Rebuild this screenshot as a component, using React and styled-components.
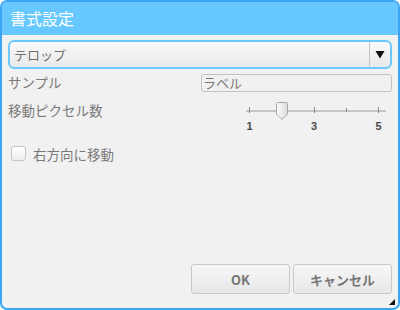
import React from 'react'
import styled, { createGlobalStyle } from 'styled-components'

const Global = createGlobalStyle`
  html, body { margin: 0; padding: 0; background: #ffffff; }
  body { font-family: "Noto Sans CJK JP", "Noto Sans", sans-serif; }
`

const Window = styled.div`
  position: relative;
  width: 400px;
  height: 310px;
  box-sizing: border-box;
  border: 2px solid #3aa6f2;
  border-radius: 7px;
  background: #f1f1f1;
  display: flex;
  flex-direction: column;
  overflow: hidden;
`

const TitleBar = styled.div`
  height: 33px;
  flex: none;
  background: #66c8ff;
  color: #ffffff;
  font-size: 16px;
  line-height: 33px;
  padding-left: 8px;
`

const Body = styled.div`
  flex: 1;
  display: flex;
  flex-direction: column;
  padding: 5px 6px 14px 6px;
`

const Select = styled.div`
  height: 29px;
  box-sizing: border-box;
  border: 2px solid #6cc8ff;
  border-radius: 6px;
  background: linear-gradient(#fafafa, #e9e9e9);
  display: flex;
  align-items: stretch;
`

const SelectText = styled.div`
  flex: 1;
  padding-left: 4px;
  font-size: 13px;
  line-height: 25px;
  color: #6e6e6e;
`

const SelectArrow = styled.div`
  width: 20px;
  border-left: 1px solid #c6c6c6;
  display: flex;
  align-items: center;
  justify-content: center;
`

const Row = styled.div`
  display: grid;
  grid-template-columns: 193px 1fr;
  margin-top: ${p => p.$mt}px;
  height: ${p => p.$h}px;
`

const Label = styled.div`
  font-size: 13.5px;
  color: #7a7a7a;
  line-height: ${p => p.$lh}px;
`

const TextInput = styled.div`
  box-sizing: border-box;
  height: 18px;
  border: 1px solid #c2c2c2;
  border-radius: 3px;
  padding-left: 1px;
  font-size: 13px;
  line-height: 16px;
  color: #777;
`

const SliderWrap = styled.div`
  position: relative;
  margin-left: 45px;
  width: 140px;
  height: 38px;
`

const Track = styled.div`
  position: absolute;
  left: 0;
  right: 0;
  top: 10px;
  height: 2px;
  background: #c6c6c6;
`

const Tick = styled.div`
  position: absolute;
  top: ${p => (p.$major ? 7 : 8)}px;
  width: 1px;
  height: ${p => (p.$major ? 6 : 4)}px;
  background: #8a8a8a;
`

const TickLabel = styled.div`
  position: absolute;
  top: 20px;
  transform: translateX(-50%);
  font-family: "Liberation Sans", Arial, sans-serif;
  font-weight: bold;
  font-size: 11px;
  color: #4a4a4a;
`

const Thumb = styled.svg`
  position: absolute;
  top: 2px;
  width: 12px;
  height: 18px;
  margin-left: -6px;
`

const CheckRow = styled.label`
  display: flex;
  align-items: center;
  gap: 7px;
  margin-top: 6px;
  padding-left: 3px;
  height: 19px;
  font-size: 13.5px;
  color: #7a7a7a;
`

const Box = styled.span`
  width: 15px;
  height: 15px;
  box-sizing: border-box;
  border: 1px solid #c4c4c4;
  border-radius: 3px;
  background: linear-gradient(#ffffff, #ececec);
`

const Buttons = styled.div`
  margin-top: auto;
  display: flex;
  justify-content: flex-end;
  gap: 3px;
`

const Button = styled.div`
  width: 99px;
  height: 30px;
  box-sizing: border-box;
  border: 1px solid #c9c9c9;
  border-radius: 3px;
  background: linear-gradient(#f7f7f7, #e7e7e7);
  display: flex;
  align-items: center;
  justify-content: center;
  font-size: 13px;
  font-weight: bold;
  color: #777;
`

const Grip = styled.svg`
  position: absolute;
  right: 3px;
  bottom: 3px;
`

const MIN = 1, MAX = 5, VALUE = 2
const pos = v => 3 + ((v - MIN) / (MAX - MIN)) * 129

export default function App() {
  const ticks = [1, 2, 3, 4, 5]
  return (
    <>
      <Global />
      <Window>
        <TitleBar>書式設定</TitleBar>
        <Body>
          <Select>
            <SelectText>テロップ</SelectText>
            <SelectArrow>
              <svg width="10" height="9" viewBox="0 0 10 9">
                <path d="M0.5 1 L9.5 1 L5 8.5 Z" fill="#111" />
              </svg>
            </SelectArrow>
          </Select>

          <Row $mt={5} $h={18}>
            <Label $lh={16}>サンプル</Label>
            <TextInput>ラベル</TextInput>
          </Row>

          <Row $mt={8} $h={38}>
            <Label $lh={20}>移動ピクセル数</Label>
            <SliderWrap>
              <Track />
              {ticks.map(t => (
                <Tick key={t} $major={t % 2 === 1} style={{ left: pos(t) }} />
              ))}
              {[1, 3, 5].map(t => (
                <TickLabel key={t} style={{ left: pos(t) + 0.5 }}>{t}</TickLabel>
              ))}
              <Thumb viewBox="0 0 12 18" style={{ left: pos(VALUE) + 0.5 }}>
                <defs>
                  <linearGradient id="tg" x1="0" x2="1" y1="0" y2="0">
                    <stop offset="0" stopColor="#fdfdfd" />
                    <stop offset="1" stopColor="#dcdcdc" />
                  </linearGradient>
                </defs>
                <path d="M1.5 0.5 H10.5 Q11.5 0.5 11.5 1.5 V12 L6 17.5 L0.5 12 V1.5 Q0.5 0.5 1.5 0.5 Z" fill="url(#tg)" stroke="#a8a8a8" />
              </Thumb>
            </SliderWrap>
          </Row>

          <CheckRow>
            <Box />
            右方向に移動
          </CheckRow>

          <Buttons>
            <Button>OK</Button>
            <Button>キャンセル</Button>
          </Buttons>
        </Body>
        <Grip width="6" height="6" viewBox="0 0 6 6">
          <path d="M6 0 V6 H0 Z" fill="#111" />
        </Grip>
      </Window>
    </>
  )
}
